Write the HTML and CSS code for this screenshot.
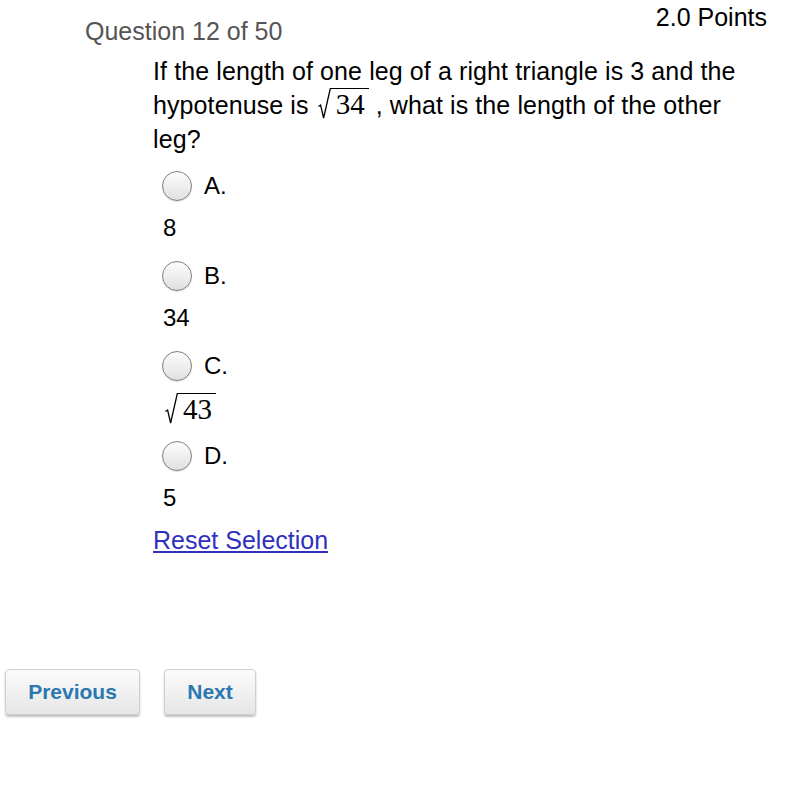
FILE: index.html
```html
<!DOCTYPE html>
<html>
<head>
<meta charset="utf-8">
<link rel="stylesheet" href="styles.css">
</head>
<body>
<div class="page">
  <div class="points">2.0 Points</div>
  <div class="qnum">Question 12 of 50</div>
  <div class="question">
    <p class="qtext">If the length of one leg of a right triangle is 3 and the hypotenuse is <span class="sqrt"><svg class="rad" width="13" height="31" viewBox="0 0 13 31"><path d="M0.5 18.5 L2.6 17 L5.6 30 L12.3 0.7 L13 0.7" fill="none" stroke="#000" stroke-width="1.3"/></svg><span class="rad-body">34</span></span> , what is the length of the other leg?</p>
    <div class="options">
      <div class="opt">
        <div class="opt-row"><span class="radio"></span><span class="letter">A.</span></div>
        <div class="ans">8</div>
      </div>
      <div class="opt">
        <div class="opt-row"><span class="radio"></span><span class="letter">B.</span></div>
        <div class="ans">34</div>
      </div>
      <div class="opt">
        <div class="opt-row"><span class="radio"></span><span class="letter">C.</span></div>
        <div class="ans"><span class="sqrt sqrt-ans"><svg class="rad" width="13" height="31" viewBox="0 0 13 31"><path d="M0.5 18.5 L2.6 17 L5.6 30 L12.3 0.7 L13 0.7" fill="none" stroke="#000" stroke-width="1.3"/></svg><span class="rad-body">43</span></span></div>
      </div>
      <div class="opt">
        <div class="opt-row"><span class="radio"></span><span class="letter">D.</span></div>
        <div class="ans">5</div>
      </div>
    </div>
    <a class="reset" href="#">Reset Selection</a>
  </div>
  <div class="nav">
    <button class="btn btn-prev">Previous</button>
    <button class="btn btn-next">Next</button>
  </div>
</div>
</body>
</html>
```

FILE: styles.css
```css
html, body {
  margin: 0;
  padding: 0;
  background: #fff;
}
body {
  font-family: "Liberation Sans", Arial, sans-serif;
  color: #000;
  width: 800px;
  height: 801px;
  overflow: hidden;
}
.page {
  padding-top: 2px;
}
.points {
  font-size: 25px;
  line-height: 30px;
  text-align: right;
  padding-right: 33px;
  height: 30px;
}
.qnum {
  font-size: 25px;
  line-height: 0px;
  color: #555;
  padding-left: 85px;
  margin-top: -1px;
  height: 23px;
}
.question {
  padding-left: 153px;
  width: 600px;
}
.qtext {
  margin: 0;
  font-size: 25px;
  line-height: 34px;
  letter-spacing: 0.1px;
}
.sqrt {
  display: inline-block;
  font-family: "Liberation Serif", "Times New Roman", serif;
  font-size: 29px;
  line-height: 0;
  letter-spacing: 0;
  margin-left: 2px;
}
.rad {
  display: inline-block;
  vertical-align: top;
}
.rad-body {
  display: inline-block;
  line-height: 26px;
  border-top: 1.3px solid #000;
  padding: 2px 4px 0 5px;
}
.sqrt-ans {
  margin-left: 2px;
  vertical-align: -3px;
}
.options {
  margin-top: 9px;
}
.opt-row {
  display: flex;
  align-items: center;
  height: 42px;
  padding-left: 9px;
}
.radio {
  width: 30px;
  height: 30px;
  border-radius: 50%;
  border: 1.6px solid #7f7f7f;
  background: linear-gradient(#fdfdfd, #e0e0e0);
  box-sizing: border-box;
  box-shadow: 0 1px 1px rgba(0,0,0,0.12);
}
.letter {
  font-size: 24px;
  margin-left: 12px;
}
.ans {
  font-size: 24px;
  height: 48px;
  line-height: 42px;
  padding-left: 10px;
}
.reset {
  display: inline-block;
  font-size: 25px;
  color: #3030c0;
  text-decoration: underline;
  margin-top: 1px;
}
.nav {
  display: flex;
  gap: 24px;
  padding-left: 5px;
  margin-top: 114px;
}
.btn {
  height: 46px;
  font-family: "Liberation Sans", Arial, sans-serif;
  font-size: 21px;
  font-weight: bold;
  color: #2a78b0;
  background: linear-gradient(#fbfbfb, #e6e6e6);
  border: 1px solid #cfcfcf;
  border-radius: 4px;
  box-shadow: 0 2px 2px rgba(0,0,0,0.25);
  padding: 0;
}
.btn-prev { width: 135px; }
.btn-next { width: 92px; }
```
